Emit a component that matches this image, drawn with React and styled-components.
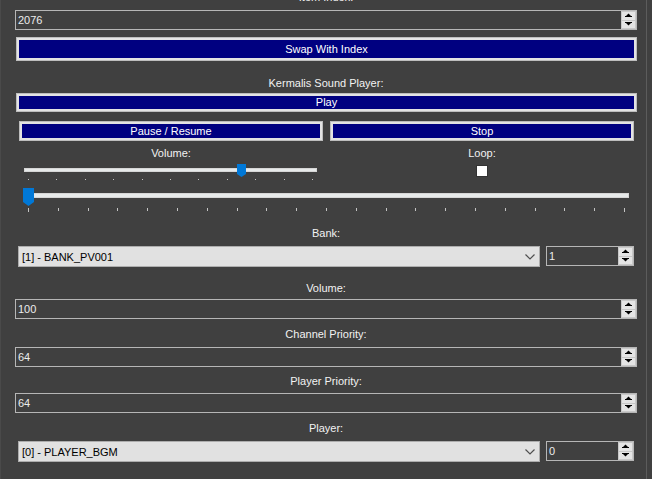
import React from 'react';
import styled, { createGlobalStyle } from 'styled-components';

const GlobalStyle = createGlobalStyle`
  html, body {
    margin: 0;
    padding: 0;
    background: #404040;
  }
  body {
    font-family: "Liberation Sans", Arial, sans-serif;
    font-size: 11px;
    overflow: hidden;
  }
`;

const Panel = styled.div`
  width: 647px;
  height: 479px;
  overflow: hidden;
  box-shadow: inset 1px 0 0 #4a4a4a, inset -1px 0 0 #5c5c5c;
`;

const Content = styled.div`
  display: flex;
  flex-direction: column;
  padding: 0 10px 0 15px;
  margin-top: -10px;
`;

const Caption = styled.div`
  height: 14px;
  line-height: 14px;
  text-align: center;
  color: #f2f2f2;
  margin-top: ${(p) => p.$mt || 0}px;
`;

const NumBox = styled.div`
  display: flex;
  box-sizing: border-box;
  height: 20px;
  width: ${(p) => (p.$w ? `${p.$w}px` : '100%')};
  border: 1px solid #b6b6b6;
  margin-top: ${(p) => p.$mt || 0}px;
  flex-shrink: 0;
`;

const NumValue = styled.div`
  flex: 1;
  padding-left: 2px;
  line-height: 18px;
  color: #ececec;
`;

const Spinner = styled.div`
  width: 15px;
  display: flex;
  flex-direction: column;
  gap: 1px;
  background: #c8c8c8;
  padding: 1px;
  box-sizing: border-box;
`;

const SpinBtn = styled.div`
  flex: 1;
  background: #e4e4e4;
  display: flex;
  align-items: center;
  justify-content: center;
`;

const NavyButton = styled.div`
  box-sizing: border-box;
  height: ${(p) => p.$h}px;
  margin-top: ${(p) => p.$mt || 0}px;
  margin-left: ${(p) => (p.$ml === undefined ? 1 : p.$ml)}px;
  background: #000080;
  border: 1px solid #bdbdbd;
  box-shadow: inset 0 0 0 2px #e3e3e3;
  color: #ffffff;
  display: flex;
  align-items: center;
  justify-content: center;
  padding-bottom: 1px;
`;

const ButtonRow = styled.div`
  display: grid;
  grid-template-columns: 304px 304px;
  column-gap: 7px;
  margin: 9px 0 0 4px;
`;

const ControlGrid = styled.div`
  display: grid;
  grid-template-columns: 304px 304px;
  column-gap: 7px;
  margin: 5px 0 0 4px;
`;

const ControlCell = styled.div`
  display: flex;
  flex-direction: column;
`;

const SliderBox = styled.div`
  position: relative;
  height: ${(p) => p.$h}px;
  width: ${(p) => p.$w}px;
  margin-left: ${(p) => p.$ml}px;
  margin-top: ${(p) => p.$mt || 0}px;
`;

const Track = styled.div`
  position: absolute;
  left: 0;
  right: 0;
  top: ${(p) => p.$top}px;
  height: ${(p) => p.$th}px;
  box-sizing: border-box;
  background: #e7eaea;
  border: 1px solid #d6d6d6;
`;

const Thumb = styled.svg`
  position: absolute;
  top: ${(p) => p.$top}px;
  left: ${(p) => p.$left}px;
`;

const Ticks = styled.div`
  position: absolute;
  left: 4px;
  right: 4px;
  top: ${(p) => p.$top}px;
  display: flex;
  justify-content: space-between;
  align-items: flex-start;
`;

const Tick = styled.div`
  width: 1px;
  height: ${(p) => p.$h}px;
  background: #c4c4c4;
`;

const CheckBox = styled.div`
  width: 12px;
  height: 12px;
  box-sizing: border-box;
  background: #ffffff;
  border: 1px solid #333333;
  margin: 5px auto 0;
`;

const PickRow = styled.div`
  display: flex;
  align-items: flex-start;
  gap: 6px;
  margin: ${(p) => p.$mt}px 0 0 3px;
`;

const Combo = styled.div`
  box-sizing: border-box;
  width: 522px;
  height: 21px;
  background: #e1e1e1;
  border: 1px solid #adadad;
  display: flex;
  align-items: center;
  justify-content: space-between;
  padding: 0 4px 0 3px;
  color: #000000;
`;

const UpArrow = () => (
  <svg width="7" height="5" viewBox="0 0 7 5">
    <polygon points="1,3 3.5,0.5 6,3" fill="#000" />
    <rect x="0" y="3" width="7" height="1" fill="#000" />
  </svg>
);

const DownArrow = () => (
  <svg width="7" height="5" viewBox="0 0 7 5">
    <rect x="0" y="0" width="7" height="1" fill="#000" />
    <polygon points="1,1 6,1 3.5,3.5" fill="#000" />
  </svg>
);

const Numeric = ({ value, w, mt }) => (
  <NumBox $w={w} $mt={mt}>
    <NumValue>{value}</NumValue>
    <Spinner>
      <SpinBtn><UpArrow /></SpinBtn>
      <SpinBtn><DownArrow /></SpinBtn>
    </Spinner>
  </NumBox>
);

const ComboPick = ({ text }) => (
  <Combo>
    <span>{text}</span>
    <svg width="10" height="6" viewBox="0 0 10 6">
      <polyline points="0.5,0.5 5,5 9.5,0.5" fill="none" stroke="#505050" strokeWidth="1.2" />
    </svg>
  </Combo>
);

const range = (n) => Array.from({ length: n }, (_, i) => i);

const App = () => (
  <>
    <GlobalStyle />
    <Panel>
      <Content>
        <Caption>Item Index:</Caption>
        <Numeric value="2076" mt={6} />
        <NavyButton $h={24} $mt={7}>Swap With Index</NavyButton>

        <Caption $mt={15}>Kermalis Sound Player:</Caption>
        <NavyButton $h={19} $mt={3}>Play</NavyButton>
        <ButtonRow>
          <NavyButton $h={20} $ml={0}>Pause / Resume</NavyButton>
          <NavyButton $h={20} $ml={0}>Stop</NavyButton>
        </ButtonRow>

        <ControlGrid>
          <ControlCell>
            <Caption>Volume:</Caption>
            <SliderBox $h={20} $w={293} $ml={5} $mt={1}>
              <Track $top={7} $th={4} />
              <Thumb $top={3} $left={213} width="9" height="13" viewBox="0 0 9 13">
                <polygon points="0,0 9,0 9,10 4.5,13 0,10" fill="#0078d7" />
              </Thumb>
              <Ticks $top={18}>
                {range(11).map((i) => <Tick key={i} $h={1} />)}
              </Ticks>
            </SliderBox>
          </ControlCell>
          <ControlCell>
            <Caption>Loop:</Caption>
            <CheckBox />
          </ControlCell>
        </ControlGrid>

        <SliderBox $h={30} $w={605} $ml={9} $mt={2}>
          <Track $top={10} $th={5} />
          <Thumb $top={5} $left={-1} width="11" height="18" viewBox="0 0 11 18">
            <polygon points="0,0 11,0 11,14 5.5,18 0,14" fill="#0078d7" />
          </Thumb>
          <Ticks $top={25}>
            {range(21).map((i) => <Tick key={i} $h={i === 0 || i === 20 ? 4 : 3} />)}
          </Ticks>
        </SliderBox>

        <Caption $mt={13}>Bank:</Caption>
        <PickRow $mt={6}>
          <ComboPick text="[1] - BANK_PV001" />
          <Numeric value="1" w={88} />
        </PickRow>

        <Caption $mt={14}>Volume:</Caption>
        <Numeric value="100" mt={4} />

        <Caption $mt={8}>Channel Priority:</Caption>
        <Numeric value="64" mt={6} />

        <Caption $mt={7}>Player Priority:</Caption>
        <Numeric value="64" mt={5} />

        <Caption $mt={8}>Player:</Caption>
        <PickRow $mt={6}>
          <ComboPick text="[0] - PLAYER_BGM" />
          <Numeric value="0" w={88} />
        </PickRow>
      </Content>
    </Panel>
  </>
);

export default App;
